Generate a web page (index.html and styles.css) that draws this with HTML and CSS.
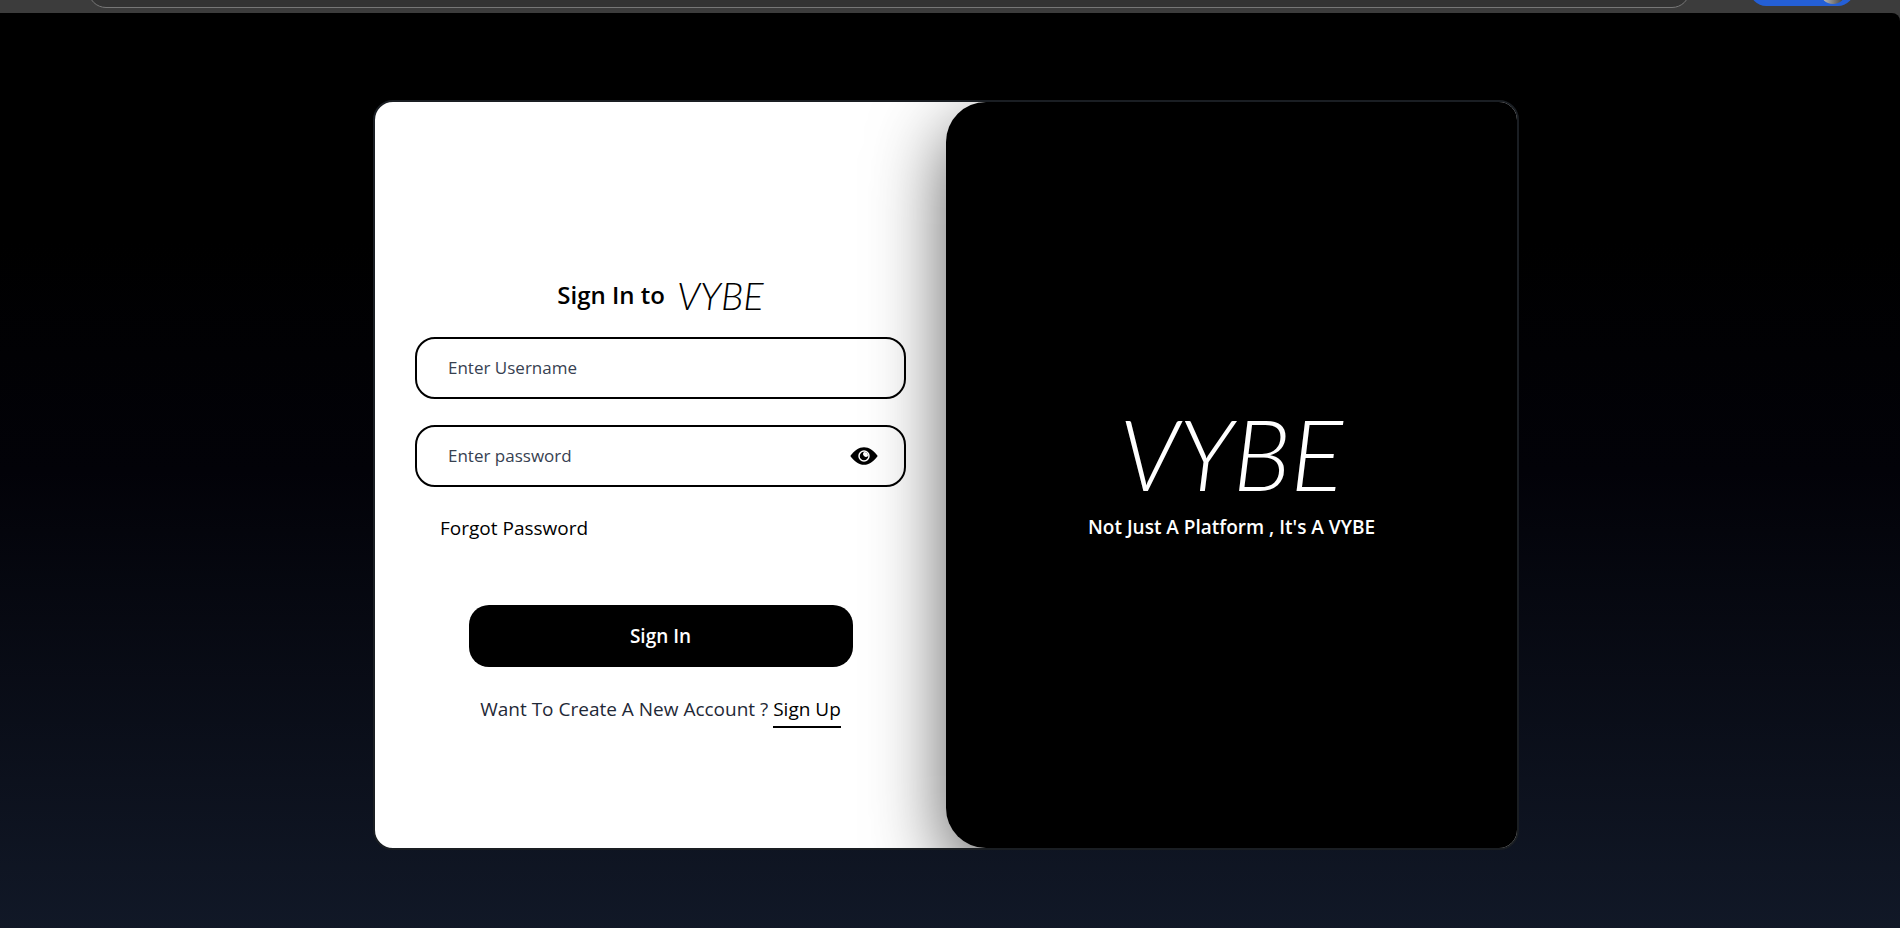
FILE: index.html
```html
<!DOCTYPE html>
<html lang="en">
<head>
<meta charset="utf-8">
<title>VYBE</title>
<link rel="stylesheet" href="styles.css">
</head>
<body>
<div class="browser-bar">
  <div class="address"></div>
  <div class="profile"><span class="avatar"></span></div>
</div>
<main class="page">
  <div class="card">
    <form class="signin">
      <h1 class="heading">Sign In to <span class="logo logo-small">VYBE</span></h1>
      <div class="fields">
        <div class="field"><input type="text" placeholder="Enter Username" aria-label="Enter Username"></div>
        <div class="field">
          <input type="password" placeholder="Enter password" aria-label="Enter password">
          <button type="button" class="reveal" aria-label="Show password">
            <svg viewBox="0 0 28 18" width="28" height="18"><path fill="#000" d="M0.300 9C4.500 3.300 9 0.200 14 0.200S23.500 3.300 27.700 9C23.500 14.700 19 17.800 14 17.800S4.500 14.700 0.300 9Z"/><circle cx="14" cy="9" r="5" fill="#000" stroke="#fff" stroke-width="1.500"/><path fill="#fff" d="M14 5A4 4 0 0 1 18 9A2.500 2.500 0 0 1 14 5Z"/></svg>
          </button>
        </div>
      </div>
      <a class="forgot" href="#">Forgot Password</a>
      <button type="submit" class="submit">Sign In</button>
      <p class="signup">Want To Create A New Account ? <a href="#">Sign Up</a></p>
    </form>
    <section class="brand">
      <div class="logo logo-large">VYBE</div>
      <p class="tagline">Not Just A Platform , It's A VYBE</p>
    </section>
  </div>
</main>
</body>
</html>
```
FILE: styles.css
```css
* { box-sizing: border-box; }
body {
  margin: 0;
  min-height: 100vh;
  display: flex;
  flex-direction: column;
  background: #3c3c3c;
  font-family: "Open Sans", "Noto Sans", sans-serif;
  font-size: 19px;
  line-height: 28px;
  color: #000;
}
h1, p { margin: 0; }
a { color: inherit; text-decoration: none; }
button, input { font: inherit; }

.browser-bar {
  height: 13px;
  overflow: hidden;
  display: flex;
  align-items: flex-end;
  padding: 0 46px 5px 88px;
}
.address {
  flex: 1;
  height: 36px;
  margin-right: 60px;
  border: 1px solid #777;
  border-radius: 18px;
  background: #333;
}
.profile {
  display: flex;
  justify-content: flex-end;
  width: 104px;
  height: 32px;
  margin-bottom: 2px;
  padding: 4px 8px;
  border-radius: 16px;
  background: #245fd6;
}
.avatar {
  width: 26px;
  height: 26px;
  border-radius: 50%;
  background: linear-gradient(90deg, #ccc, #333);
}

.page {
  flex: 1;
  display: flex;
  justify-content: center;
  align-items: flex-start;
  padding: 87px 8px 76px 0;
  border-top-right-radius: 8px;
  background: linear-gradient(#000, #000 25%, #020208 50%, #111827);
}
.card {
  width: 100%;
  max-width: 1146px;
  min-height: 750px;
  display: grid;
  grid-template-columns: 1fr 1fr;
  overflow: hidden;
  border: 2px solid #1a1e23;
  border-radius: 20px;
  background: #fff;
}
.signin {
  display: flex;
  flex-direction: column;
  align-items: center;
  justify-content: center;
  padding: 48px 40px 0;
}
.heading {
  display: flex;
  align-items: center;
  gap: 12px;
  margin-bottom: 22px;
  font-size: 24px;
  font-weight: 600;
  line-height: 40px;
}
.logo {
  font-family: Lato, sans-serif;
  font-style: italic;
  font-weight: 300;
}
.logo-small { font-size: 38px; }
.logo-large { font-size: 98px; line-height: 88px; }
.fields {
  width: 100%;
  display: grid;
  gap: 26px;
}
.field {
  height: 62px;
  display: flex;
  align-items: center;
  padding: 0 26px 0 31px;
  border: 2px solid #000;
  border-radius: 20px;
}
.field input {
  flex: 1;
  min-width: 0;
  padding: 0;
  border: 0;
  outline: 0;
  background: none;
  font-size: 17px;
}
.field input::placeholder { color: #374151; opacity: 1; }
.reveal {
  display: flex;
  padding: 0;
  border: 0;
  background: none;
}
.forgot {
  align-self: flex-start;
  margin: 27px 25px 63px;
}
.submit {
  width: 384px;
  max-width: 100%;
  height: 62px;
  border: 0;
  border-radius: 20px;
  background: #000;
  color: #fff;
  font-weight: 600;
}
.signup {
  margin-top: 28px;
  color: #1f2937;
}
.signup a {
  color: #000;
  padding-bottom: 4px;
  border-bottom: 2px solid #000;
}
.brand {
  display: flex;
  flex-direction: column;
  align-items: center;
  justify-content: center;
  gap: 16px;
  border-radius: 40px 0 0 40px;
  background: #000;
  color: #fff;
  box-shadow: 0 25px 75px #000000a0;
}
.tagline { font-weight: 600; }
```
